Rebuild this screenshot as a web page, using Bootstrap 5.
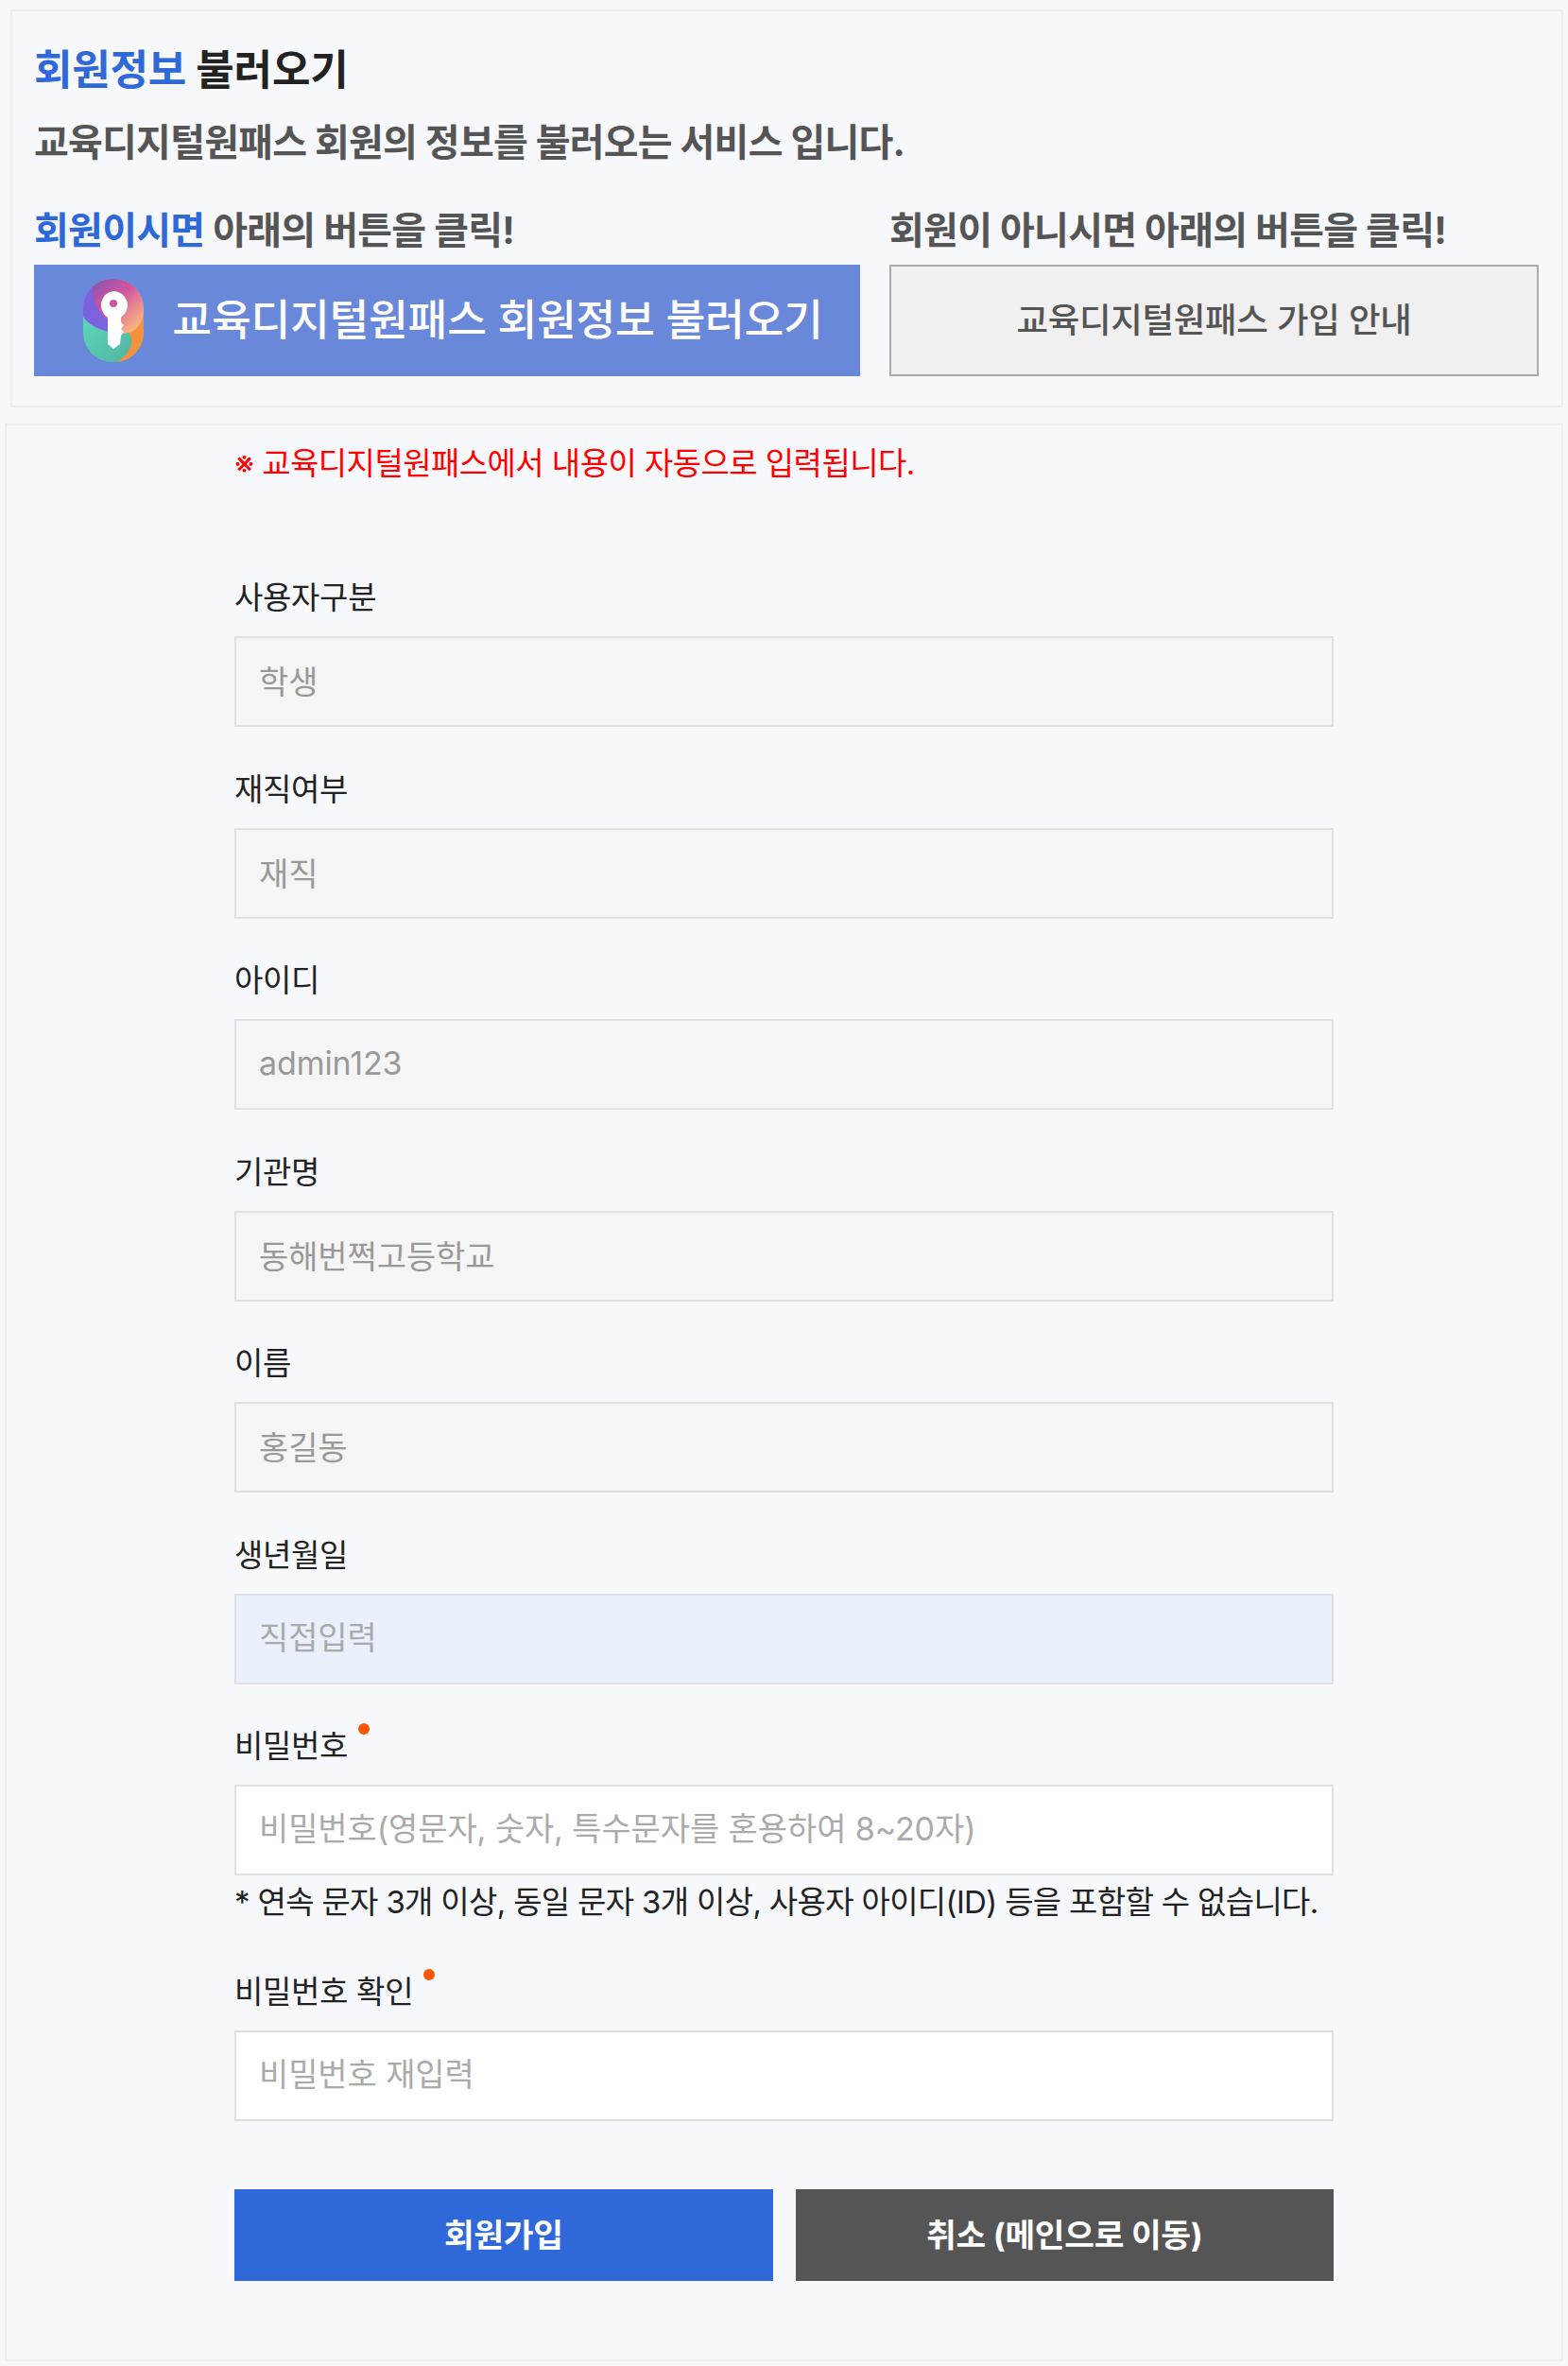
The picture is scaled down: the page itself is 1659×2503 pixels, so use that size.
<!DOCTYPE html>
<html lang="ko">
<head>
    <meta charset="UTF-8">
    <meta name="viewport" content="width=device-width, initial-scale=1.0">
    <title>회원가입</title>
    <link href="https://cdn.jsdelivr.net/npm/bootstrap@5.3.0/dist/css/bootstrap.min.css" rel="stylesheet">
    <style>
        body {
            background-color: #f7f8fb;
            font-family: "Inter", "Noto Sans CJK KR", sans-serif;
            color: #222;
            letter-spacing: -0.02em;
        }
        .page-wrap {
            padding: 10px 5px 3px 5px;
        }
        .panel-box {
            border: 2px solid #eceef0;
            background-color: #f7f8fb;
        }
        .load-panel {
            margin-left: 6px;
            padding: 32px 23px 31px 23px;
            margin-bottom: 17px;
        }
        .load-title {
            font-size: 44px;
            line-height: 60px;
            font-weight: 700;
            letter-spacing: -0.2px;
            color: #222;
            margin: 0;
        }
        .load-desc {
            font-size: 40px;
            line-height: 50px;
            font-weight: 700;
            letter-spacing: -0.76px;
            color: #555;
            margin: 22px 0 0 0;
        }
        .load-cols {
            margin-top: 45px;
            gap: 31px;
        }
        .load-left {
            width: 874px;
        }
        .load-right {
            width: 687px;
        }
        .load-sub {
            font-size: 40px;
            line-height: 46px;
            font-weight: 700;
            letter-spacing: -0.72px;
            color: #555;
            margin: 0 0 13px 0;
        }
        .text-accent {
            color: #2f69d9;
        }
        .btn-load {
            height: 118px;
            border-radius: 0;
            font-size: 45.5px;
            font-weight: 500;
            letter-spacing: inherit;
            gap: 30px;
            padding: 0;
        }
        .btn-load-member {
            background-color: #6a88da;
            border: 0;
            color: #fff;
            padding-left: 13px;
        }
        .btn-load-guest {
            background-color: #f0f0f0;
            border: 2px solid #aaa;
            color: #555;
            font-size: 36.5px;
        }
        .form-panel {
            padding: 18px 0 83px 241px;
        }
        .form-inner {
            width: 1163px;
        }
        .auto-note {
            color: #f00;
            font-size: 33px;
            line-height: 44px;
            letter-spacing: -0.57px;
            margin: 0 0 96px 0;
        }
        .field-group {
            margin-bottom: 41.5px;
        }
        .field-label {
            display: block;
            font-size: 33px;
            line-height: 44px;
            padding-top: 2px;
            margin: 0 0 19px 0;
        }
        .req-dot {
            display: inline-block;
            position: relative;
            top: -10px;
            width: 12px;
            height: 12px;
            border-radius: 50%;
            background-color: #ff5500;
            margin-left: 11px;
            vertical-align: 14px;
        }
        .form-control.field-input {
            height: 96px;
            border: 2px solid #dfe0e2;
            border-radius: 0;
            padding: 0 24px 3px 24px;
            font-size: 34px;
            letter-spacing: -0.1px;
            color: #999;
            background-color: #fff;
        }
        .form-control.field-input::placeholder {
            color: #aaa;
        }
        .form-control.field-input[readonly] {
            background-color: #f5f5f5;
        }
        .form-control.field-input.is-direct {
            background-color: #e9f0fc;
        }
        .pw-help {
            font-size: 33px;
            line-height: 44px;
            letter-spacing: -0.68px;
            white-space: nowrap;
            margin: 6px 0 49px 0;
        }
        .form-btns {
            margin-top: 72px;
            gap: 24px;
        }
        .btn-submit {
            height: 97px;
            border: 0;
            border-radius: 0;
            font-size: 34.5px;
            font-weight: 700;
            letter-spacing: inherit;
            color: #fff;
        }
        .btn-join {
            background-color: #2f69d9;
        }
        .btn-cancel {
            background-color: #555;
        }
    </style>
</head>
<body>
    <div class="page-wrap">
        <!-- 회원정보 불러오기 -->
        <div class="panel-box load-panel">
            <h2 class="load-title"><span class="text-accent">회원정보</span> 불러오기</h2>
            <p class="load-desc">교육디지털원패스 회원의 정보를 불러오는 서비스 입니다.</p>
            <div class="load-cols d-flex">
                <div class="load-left">
                    <p class="load-sub"><span class="text-accent">회원이시면</span> 아래의 버튼을 클릭!</p>
                    <button type="button" class="btn btn-load btn-load-member w-100 d-flex align-items-center justify-content-center">
                        <svg width="64" height="88" viewBox="0 0 64 88" aria-hidden="true">
                            <defs>
                                <linearGradient id="g-top" x1="0.1" y1="0.1" x2="0.9" y2="0.9">
                                    <stop offset="0" stop-color="#8a55b0"/>
                                    <stop offset="0.45" stop-color="#d0559f"/>
                                    <stop offset="1" stop-color="#fdb980"/>
                                </linearGradient>
                                <linearGradient id="g-bot" x1="0" y1="0" x2="1" y2="1">
                                    <stop offset="0" stop-color="#5fe2c4"/>
                                    <stop offset="1" stop-color="#52ae9c"/>
                                </linearGradient>
                                <clipPath id="logo-clip">
                                    <rect width="64" height="88" rx="31"/>
                                </clipPath>
                            </defs>
                            <g clip-path="url(#logo-clip)">
                                <rect width="64" height="88" fill="url(#g-bot)"/>
                                <path d="M64 36V88H36C48 80 54 70 50 60 47 52 42 50 40 48z" fill="#f5913c"/>
                                <path d="M0 0H64V34C64 48 54 58 42 58L22 50C10 46 0 42 0 30z" fill="url(#g-top)"/>
                                <path d="M0 18C2 14 6 10 10 8 8 22 16 40 38 50V58C24 56 8 52 0 40z" fill="#7d62e0"/>
                            </g>
                            <path d="M32 13a15 15 0 0 1 8 27.700V46l3 3-3 4 3 3-3 4-1 9-7 5-6-5V40.700A15 15 0 0 1 32 13z" fill="#fff"/>
                            <circle cx="32" cy="26" r="4" fill="#d0559f"/>
                        </svg>
                        <span>교육디지털원패스 회원정보 불러오기</span>
                    </button>
                </div>
                <div class="load-right">
                    <p class="load-sub">회원이 아니시면 아래의 버튼을 클릭!</p>
                    <button type="button" class="btn btn-load btn-load-guest w-100">교육디지털원패스 가입 안내</button>
                </div>
            </div>
        </div>

        <!-- 가입 폼 -->
        <div class="panel-box form-panel">
            <form class="form-inner">
                <p class="auto-note">※ 교육디지털원패스에서 내용이 자동으로 입력됩니다.</p>
                <div class="field-group">
                    <label class="field-label" for="f-type">사용자구분</label>
                    <input type="text" class="form-control field-input" id="f-type" value="학생" readonly>
                </div>
                <div class="field-group">
                    <label class="field-label" for="f-job">재직여부</label>
                    <input type="text" class="form-control field-input" id="f-job" value="재직" readonly>
                </div>
                <div class="field-group">
                    <label class="field-label" for="f-id">아이디</label>
                    <input type="text" class="form-control field-input" id="f-id" value="admin123" readonly>
                </div>
                <div class="field-group">
                    <label class="field-label" for="f-org">기관명</label>
                    <input type="text" class="form-control field-input" id="f-org" value="동해번쩍고등학교" readonly>
                </div>
                <div class="field-group">
                    <label class="field-label" for="f-name">이름</label>
                    <input type="text" class="form-control field-input" id="f-name" value="홍길동" readonly>
                </div>
                <div class="field-group">
                    <label class="field-label" for="f-birth">생년월일</label>
                    <input type="text" class="form-control field-input is-direct" id="f-birth" placeholder="직접입력">
                </div>
                <div>
                    <label class="field-label" for="f-pw">비밀번호<span class="req-dot"></span></label>
                    <input type="password" class="form-control field-input" id="f-pw" placeholder="비밀번호(영문자, 숫자, 특수문자를 혼용하여 8~20자)">
                    <p class="pw-help">* 연속 문자 3개 이상, 동일 문자 3개 이상, 사용자 아이디(ID) 등을 포함할 수 없습니다.</p>
                </div>
                <div>
                    <label class="field-label" for="f-pw2">비밀번호 확인<span class="req-dot"></span></label>
                    <input type="password" class="form-control field-input" id="f-pw2" placeholder="비밀번호 재입력">
                </div>
                <div class="form-btns d-flex">
                    <button type="button" class="btn btn-submit btn-join flex-fill w-50">회원가입</button>
                    <button type="button" class="btn btn-submit btn-cancel flex-fill w-50">취소 (메인으로 이동)</button>
                </div>
            </form>
        </div>
    </div>
    <script src="https://cdn.jsdelivr.net/npm/bootstrap@5.3.0/dist/js/bootstrap.bundle.min.js"></script>
</body>
</html>
